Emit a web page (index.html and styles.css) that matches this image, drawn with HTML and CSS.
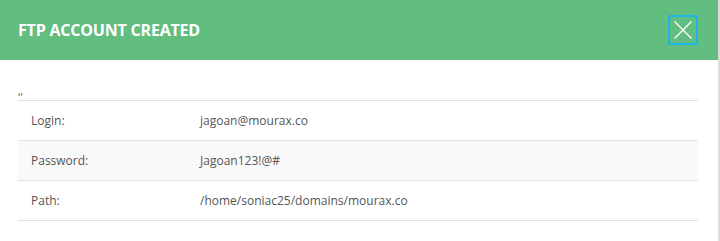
FILE: index.html
```html
<!DOCTYPE html>
<html>
<head>
<meta charset="utf-8">
<link rel="stylesheet" href="styles.css">
</head>
<body>
<div class="modal">
  <div class="modal-header">
    <h2 class="modal-title">FTP ACCOUNT CREATED</h2>
    <button class="close-btn" aria-label="Close">
      <svg width="20" height="20" viewBox="0 0 20 20"><path d="M1.5 1.5 L18.5 18.5 M18.5 1.5 L1.5 18.5" stroke="#fff" stroke-width="1.3" fill="none"/></svg>
    </button>
  </div>
  <div class="modal-body">
    <div class="note">,,</div>
    <table class="info">
      <tr><td class="label">Login:</td><td>jagoan@mourax.co</td></tr>
      <tr class="alt"><td class="label">Password:</td><td>Jagoan123!@#</td></tr>
      <tr><td class="label">Path:</td><td>/home/soniac25/domains/mourax.co</td></tr>
    </table>
  </div>
</div>
</body>
</html>
```
FILE: styles.css
```css
html, body {
  margin: 0;
  padding: 0;
}
body {
  background: #dedede;
  font-family: "Open Sans", "Liberation Sans", sans-serif;
  width: 720px;
  height: 241px;
  overflow: hidden;
}
.modal {
  width: 718px;
  height: 241px;
  background: #fff;
}
.modal-header {
  height: 60px;
  background: #62bd80;
  display: flex;
  align-items: center;
  justify-content: space-between;
  padding: 0 20px 0 18px;
  box-sizing: border-box;
}
.modal-title {
  margin: 0;
  color: #fff;
  font-size: 16px;
  font-weight: 700;
  letter-spacing: -0.2px;
}
.close-btn {
  width: 30px;
  height: 30px;
  margin-top: -1px;
  padding: 0;
  background: transparent;
  border: 2px solid #1cb4e6;
  border-radius: 3px;
  display: flex;
  align-items: center;
  justify-content: center;
  box-sizing: border-box;
}
.close-btn svg {
  display: block;
}
.modal-body {
  padding: 22px 20px 0 18px;
}
.note {
  font-size: 10px;
  color: #555;
  line-height: 18px;
  height: 18px;
}
.info {
  width: 100%;
  border-collapse: collapse;
  border-top: 1px solid #e0e0e0;
  font-size: 12px;
  color: #555;
}
.info td {
  height: 39px;
  padding: 0;
  border-bottom: 1px solid #e0e0e0;
  vertical-align: middle;
}
.info td.label {
  width: 169px;
  padding-left: 13px;
}
.info tr.alt td {
  background: #f9f9f9;
}
```
